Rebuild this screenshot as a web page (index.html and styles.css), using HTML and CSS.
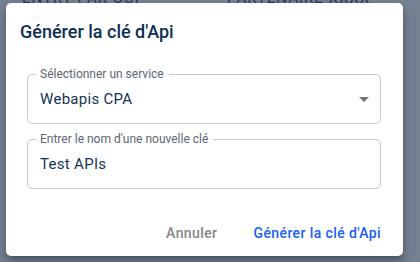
FILE: index.html
```html
<!DOCTYPE html>
<html lang="fr">
<head>
  <meta charset="UTF-8">
  <title>Clés d'Api</title>
  <link rel="stylesheet" href="styles.css">
</head>
<body>

  <!-- Page behind the dialog -->
  <div class="page">
    <div class="page__row">
      <div class="page__cell">ENTRY PAR OUI</div>
      <div class="page__cell">PARTENAIRE XXXX</div>
    </div>
    <div class="page__card"></div>
  </div>

  <!-- Dialog -->
  <div class="backdrop"></div>
  <div class="dialog">
    <h2 class="dialog__title">Générer la clé d'Api</h2>

    <div class="dialog__content">
      <div class="field">
        <span class="field__label">Sélectionner un service</span>
        <span>Webapis CPA</span>
        <svg class="field__arrow" width="10" height="5" viewBox="0 0 10 5">
          <path d="M0 0 L10 0 L5 5 Z" fill="#757575"/>
        </svg>
      </div>

      <div class="field">
        <span class="field__label">Entrer le nom d'une nouvelle clé</span>
        <span>Test APIs</span>
      </div>
    </div>

    <div class="dialog__actions">
      <button class="btn btn--muted">Annuler</button>
      <button class="btn btn--primary">Générer la clé d'Api</button>
    </div>
  </div>

</body>
</html>
```

FILE: styles.css
```css
body {
  margin: 0;
  font-family: Roboto, "Noto Sans", sans-serif;
  background: #eef1f5;
  width: 420px;
  height: 262px;
  overflow: hidden;
}

/* Page behind */
.page {
  display: flex;
  flex-direction: column;
}

.page__row {
  display: grid;
  grid-template-columns: 212px 208px;
  margin-top: -10px;
}

.page__cell {
  padding: 0 0 0 22px;
  font-size: 15px;
  letter-spacing: 1px;
  color: #1e3550;
  line-height: 16px;
  border-right: 1px solid #c9d1da;
}

.page__cell + .page__cell {
  padding-left: 15px;
  border-right: none;
}

.page__card {
  margin: 6px 0 0 414px;
  height: 240px;
  border-left: 1px solid #d5dbe2;
  border-radius: 6px 0 0 0;
}

.backdrop {
  position: absolute;
  inset: 0;
  background: rgba(40, 60, 85, 0.62);
}

/* Dialog */
.dialog {
  position: absolute;
  top: 3px;
  left: 6px;
  width: 397px;
  height: 253px;
  box-sizing: border-box;
  background: #fff;
  border-radius: 5px;
  box-shadow: 0 8px 12px rgba(0, 0, 0, 0.25), 0 2px 4px rgba(0, 0, 0, 0.15);
  padding: 17px 22px 0 14px;
  display: flex;
  flex-direction: column;
}

.dialog__title {
  margin: 0;
  font-size: 18px;
  font-weight: 500;
  line-height: 24px;
  color: #0e2f52;
}

.dialog__content {
  display: flex;
  flex-direction: column;
  gap: 15px;
  padding: 30px 0 0 7px;
}

.field {
  position: relative;
  display: flex;
  align-items: center;
  justify-content: space-between;
  height: 50px;
  box-sizing: border-box;
  padding: 0 11px 0 12px;
  border: 1px solid #c8c8c8;
  border-radius: 5px;
  font-size: 15px;
  letter-spacing: 0.3px;
  color: #123456;
}

.field__label {
  position: absolute;
  top: -8px;
  left: 8px;
  padding: 0 5px 0 4px;
  background: #fff;
  font-size: 12px;
  line-height: 14px;
  letter-spacing: 0;
  color: #5d6673;
}

.dialog__actions {
  margin-top: auto;
  display: flex;
  justify-content: flex-end;
  gap: 36px;
  padding-bottom: 13px;
}

.btn {
  border: none;
  background: none;
  padding: 0;
  font-family: Roboto, "Noto Sans", sans-serif;
  font-size: 14px;
  font-weight: 500;
  letter-spacing: 0.4px;
  line-height: 20px;
  cursor: pointer;
}

.btn--muted {
  color: #858585;
}

.btn--primary {
  color: #1a5ef4;
}
```
